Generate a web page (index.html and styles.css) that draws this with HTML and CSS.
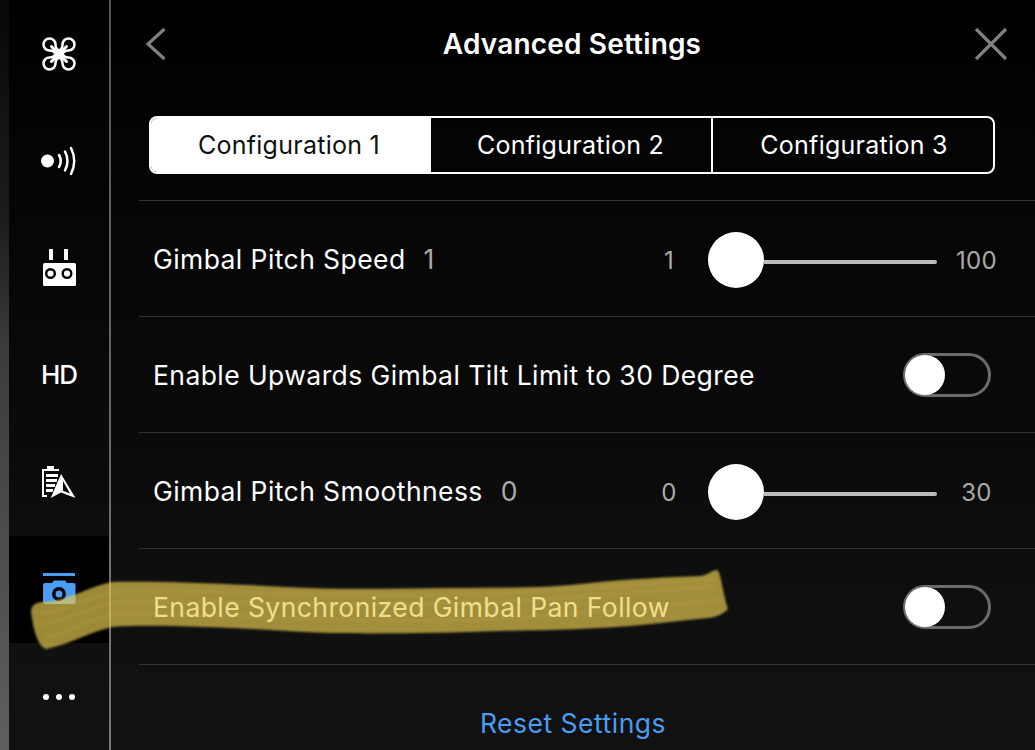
FILE: index.html
```html
<!DOCTYPE html>
<html lang="en">
<head>
<meta charset="utf-8">
<title>Advanced Settings</title>
<link rel="stylesheet" href="styles.css">
</head>
<body>
<div class="app">
  <div class="edge"></div>
  <nav class="sidebar">
    <div class="nav-item">
      <svg class="icon" width="34" height="34" viewBox="0 0 34 34">
        <g fill="none" stroke="#fff" stroke-width="2.500">
          <path d="M17 13.500C14.500 12.500 13.500 10 13.500 7.500A6 6 0 1 0 7.500 13.500C10 13.500 12.500 14.500 13.500 17"/>
          <path transform="rotate(90 17 17)" d="M17 13.500C14.500 12.500 13.500 10 13.500 7.500A6 6 0 1 0 7.500 13.500C10 13.500 12.500 14.500 13.500 17"/>
          <path transform="rotate(180 17 17)" d="M17 13.500C14.500 12.500 13.500 10 13.500 7.500A6 6 0 1 0 7.500 13.500C10 13.500 12.500 14.500 13.500 17"/>
          <path transform="rotate(270 17 17)" d="M17 13.500C14.500 12.500 13.500 10 13.500 7.500A6 6 0 1 0 7.500 13.500C10 13.500 12.500 14.500 13.500 17"/>
          <path stroke-width="3" stroke-linecap="round" d="M9.500 9.500L24.500 24.500M24.500 9.500L9.500 24.500"/>
        </g>
        <path fill="#fff" d="M17 11.500L22.500 17L17 22.500L11.500 17Z"/>
      </svg>
    </div>
    <div class="nav-item">
      <svg class="icon" width="36" height="30" viewBox="0 0 36 30"><circle cx="6.500" cy="15" r="6.500" fill="#fff"/><g fill="none" stroke="#fff" stroke-width="2.500" stroke-linecap="round"><path d="M18 9Q21.500 15 18 21"/><path d="M24 5.500Q29 15 24 24.500"/><path d="M30 2Q36.500 15 30 28"/></g></svg>
    </div>
    <div class="nav-item">
      <svg class="icon" width="33" height="37" viewBox="0 0 33 37"><path fill="#fff" d="M6 0h4v11H6zM21 0h4v11h-4z"/><rect y="14" width="33" height="23" rx="1.500" fill="#fff"/><g fill="none" stroke="#000" stroke-width="2.400"><circle cx="7.500" cy="24.500" r="4.300"/><circle cx="24" cy="24.500" r="4.300"/></g></svg>
    </div>
    <div class="nav-item"><span class="hd">HD</span></div>
    <div class="nav-item">
      <svg class="icon" width="34" height="33" viewBox="0 0 34 33"><path fill="#fff" d="M5 0h7v3h5v2H2v24h3v2H0V3h5zM4 8h12v3H4zM4 13h11v3H4zM4 18h9v3H4zM4 23h7v3H4z"/><path fill="#fff" stroke="#0a0a0a" stroke-width="1.500" paint-order="stroke" d="M19 8L8.700 32L19 26.500L33.500 32Z"/><path fill="#0a0a0a" d="M21 15L28 27.500L21 24.800Z"/></svg>
    </div>
    <div class="nav-item active">
      <svg class="icon" width="33" height="33" viewBox="0 0 33 33"><path fill="#4a9df0" d="M0 0h32v3H0zM9 10l2-2.500h11l2 2.500h6.500q2 0 2 2v17q0 2-2 2H2q-2 0-2-2V12q0-2 2-2z"/><circle cx="16" cy="21" r="5.200" fill="none" stroke="#000" stroke-width="3.400"/></svg>
    </div>
    <div class="nav-item">
      <div class="dots"><i></i><i></i><i></i></div>
    </div>
  </nav>
  <main class="panel">
    <header class="top">
      <svg width="22" height="34" viewBox="0 0 22 34"><path d="M19.500 2L3 17L19.500 32" fill="none" stroke="#808080" stroke-width="3.200"/></svg>
      <h1 class="title">Advanced Settings</h1>
      <svg width="34" height="34" viewBox="0 0 34 34"><path d="M2 2L32 32M32 2L2 32" fill="none" stroke="#808080" stroke-width="3.200"/></svg>
    </header>
    <div class="tabs">
      <div class="tab selected">Configuration 1</div>
      <div class="tab">Configuration 2</div>
      <div class="tab">Configuration 3</div>
    </div>
    <section class="rows">
      <div class="row">
        <span class="label">Gimbal Pitch Speed</span><span class="value">1</span>
        <div class="slider">
          <span class="min">1</span>
          <div class="thumb"></div>
          <div class="track"></div>
          <span class="max">100</span>
        </div>
      </div>
      <div class="row">
        <span class="label">Enable Upwards Gimbal Tilt Limit to 30 Degree</span>
        <div class="toggle"><div class="knob"></div></div>
      </div>
      <div class="row">
        <span class="label">Gimbal Pitch Smoothness</span><span class="value">0</span>
        <div class="slider">
          <span class="min">0</span>
          <div class="thumb"></div>
          <div class="track"></div>
          <span class="max">30</span>
        </div>
      </div>
      <div class="row">
        <span class="label">Enable Synchronized Gimbal Pan Follow</span>
        <div class="toggle"><div class="knob"></div></div>
      </div>
    </section>
    <div class="reset">Reset Settings</div>
  </main>
  <svg class="marker" width="1035" height="750" viewBox="0 0 1035 750">
    <path class="ink" d="M31 611C32 604 36 602 46 602C70 600 90 586 112 582C150 581 200 583 250 585C320 590 380 589 450 588C500 588 550 588 590 583C630 579 670 577 700 576C708 575 712 570 717 570C721 572 722 590 728 609C724 613 718 617 708 618C680 621 660 623 630 626C590 629 560 630 500 631C440 633 380 634 330 633C290 632 250 628 205 627C170 626 140 625 112 627C90 632 70 644 46 649C38 646 33 630 31 611Z"/>
    <path class="streak" d="M40 625C70 620 95 604 120 602C200 600 300 606 420 604C520 603 620 594 716 586"/>
    <path class="streak" d="M38 614C70 610 95 594 120 591C200 590 300 596 420 595C520 594 620 586 716 579"/>
    <path class="streak" d="M44 638C70 632 95 616 120 614C200 612 300 620 420 621C520 620 620 610 720 600"/>
  </svg>
</div>
</body>
</html>
```
FILE: styles.css
```css
* { box-sizing: border-box; }
html, body { margin: 0; height: 100%; background: #000; }
body { font-family: Inter, "Liberation Sans", sans-serif; overflow: hidden; }
.app {
  position: relative;
  display: flex;
  width: 1035px;
  height: 750px;
  color: #fff;
  background: linear-gradient(#000 0, #050505 200px, #0a0a0a 420px, #111 680px, #111 100%);
}
.edge {
  width: 9px;
  flex: none;
  background: linear-gradient(#080808 0, #1c1c1c 220px, #3c3c3c 350px, #5e5e5e 100%);
}
.sidebar {
  width: 102px;
  flex: none;
  display: grid;
  grid-template-rows: repeat(7, 1fr);
  border-right: 2px solid;
  border-image: linear-gradient(#555, #666 50%, #777) 1;
}
.nav-item { display: flex; align-items: center; justify-content: center; }
.nav-item.active { background: #000; }
.icon { display: block; }
.hd { font-size: 26px; font-weight: 500; letter-spacing: -1px; color: #fff; }
.dots { display: flex; gap: 7px; margin-top: 2px; }
.dots i { display: block; width: 6px; height: 6px; border-radius: 50%; background: #fff; }
.panel { flex: 1; min-width: 0; display: flex; flex-direction: column; }
.top {
  height: 88px;
  display: flex;
  align-items: center;
  justify-content: space-between;
  padding: 0 27px 0 34px;
}
.title { margin: 0; padding-left: 3px; font-size: 28px; font-weight: 600; line-height: 1; letter-spacing: 0.17px; }
.tabs {
  margin: 28px 40px 0 38px;
  height: 58px;
  display: flex;
  border: 2px solid #fff;
  border-radius: 8px;
  overflow: hidden;
}
.tab {
  display: flex;
  align-items: center;
  justify-content: center;
  font-size: 25px;
  letter-spacing: 0.27px;
  flex: none;
}
.tab:nth-child(1) { width: 280px; padding-right: 4px; }
.tab:nth-child(2) { width: 280px; padding-right: 1px; }
.tab:nth-child(3) { width: 282px; padding-left: 2px; border-left: 2px solid #fff; }
.tab.selected { background: #fff; color: #111; }
.rows { margin: 26px 0 0 28px; }
.row {
  height: 116px;
  display: flex;
  align-items: center;
  padding: 3px 19px 0 14px;
  border-top: 1px solid #333;
  font-size: 26.500px;
  letter-spacing: 0.42px;
}
.row:last-child { border-bottom: 1px solid #333; height: 117px; }
.label { white-space: nowrap; padding-bottom: 2px; }
.value { margin-left: 18px; padding-bottom: 2px; color: #aaa; }
.slider { margin-left: auto; display: flex; align-items: center; font-size: 24px; letter-spacing: 0.3px; color: #aaa; }
.min { width: 40px; text-align: center; margin-right: 19px; }
.thumb { width: 56px; height: 56px; border-radius: 50%; background: #fff; flex: none; }
.track { width: 173px; height: 4px; margin-top: 4px; border-radius: 0 2px 2px 0; background: #bbb; }
.max { width: 79px; text-align: center; }
.toggle {
  margin: -2px 25px 0 auto;
  width: 88px;
  height: 44px;
  padding: 0 0 0 2px;
  display: flex;
  align-items: center;
  border: 3px solid #6b6b6b;
  border-radius: 22px;
}
.knob { width: 40px; height: 40px; margin-left: -3px; border-radius: 50%; background: #fff; flex: none; }
.reset { padding-top: 42px; text-align: center; font-size: 26.500px; letter-spacing: 0.5px; line-height: 32px; color: #4a9df0; }
.marker { position: absolute; left: 0; top: 0; pointer-events: none; }
.ink { fill: rgba(234, 206, 82, 0.67); filter: blur(1.200px); }
.streak { fill: none; stroke: rgba(255, 232, 130, 0.05); stroke-width: 4; filter: blur(1.200px); }
```
